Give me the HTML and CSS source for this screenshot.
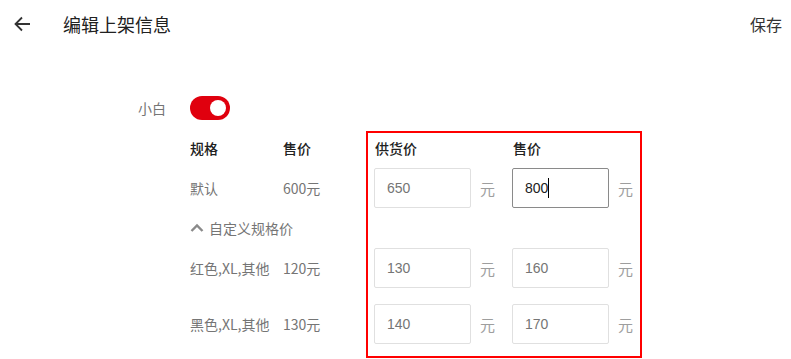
FILE: index.html
```html
<!DOCTYPE html>
<html lang="zh">
<head>
<meta charset="utf-8">
<link rel="stylesheet" href="styles.css">
</head>
<body>
<header class="topbar">
  <svg class="back" width="16" height="16" viewBox="0 0 16 16"><path d="M16 8H2M8 1.5L1.5 8L8 14.5" fill="none" stroke="#333" stroke-width="1.8"/></svg>
  <h1 class="title">编辑上架信息</h1>
  <span class="save">保存</span>
</header>
<main class="content">
  <div class="switch-row">
    <span class="switch-label">小白</span>
    <span class="switch"><span class="knob"></span></span>
  </div>
  <div class="grid">
    <div class="left">
      <div class="row head"><span class="c1">规格</span><span class="c2">售价</span></div>
      <div class="row item"><span class="c1">默认</span><span class="c2">600元</span></div>
      <div class="row custom">
        <svg class="chev" width="14" height="10" viewBox="0 0 14 10"><path d="M1.5 8L7 2.5L12.5 8" fill="none" stroke="#8a8a8a" stroke-width="2.4"/></svg>
        <span>自定义规格价</span>
      </div>
      <div class="row item"><span class="c1">红色,XL,其他</span><span class="c2">120元</span></div>
      <div class="row item last"><span class="c1">黑色,XL,其他</span><span class="c2">130元</span></div>
    </div>
    <div class="box">
      <div class="row head"><span class="c3">供货价</span><span class="c3">售价</span></div>
      <div class="row item">
        <span class="field"><span class="input">650</span><span class="unit">元</span></span>
        <span class="field"><span class="input active"><span class="caret">800</span></span><span class="unit">元</span></span>
      </div>
      <div class="row custom"></div>
      <div class="row item">
        <span class="field"><span class="input">130</span><span class="unit">元</span></span>
        <span class="field"><span class="input">160</span><span class="unit">元</span></span>
      </div>
      <div class="row item last">
        <span class="field"><span class="input">140</span><span class="unit">元</span></span>
        <span class="field"><span class="input">170</span><span class="unit">元</span></span>
      </div>
    </div>
  </div>
</main>
</body>
</html>
```
FILE: styles.css
```css
* { box-sizing: border-box; }
body {
  margin: 0;
  width: 791px;
  height: 359px;
  overflow: hidden;
  background: #fff;
  font-family: "Noto Sans CJK SC", "Liberation Sans", sans-serif;
  font-size: 14px;
  color: #212121;
}
.topbar {
  height: 48px;
  display: flex;
  align-items: center;
  padding: 0 9px 0 14px;
}
.back { flex: none; margin-right: 33px; }
.title {
  margin: 0;
  font-size: 18px;
  font-weight: 400;
  color: #212121;
  flex: 1;
}
.save { font-size: 16px; color: #333; }
.content { padding-left: 138px; }
.switch-row {
  display: flex;
  align-items: center;
  height: 24px;
  margin-top: 48px;
}
.switch-label { width: 52px; color: #757575; }
.switch {
  position: relative;
  width: 40px;
  height: 24px;
  border-radius: 12px;
  background: #e0000e;
}
.knob {
  position: absolute;
  right: 4px;
  top: 4px;
  width: 16px;
  height: 16px;
  border-radius: 50%;
  background: #fff;
}
.grid {
  display: flex;
  margin-top: 11px;
  margin-left: 52px;
}
.left { width: 176px; flex: none; padding-top: 2px; }
.box {
  flex: none;
  width: 276px;
  border: 2px solid #f00;
  padding: 0 0 7px 6px;
}
.row { display: flex; align-items: center; }
.row.head { height: 30px; font-weight: 500; color: #212121; }
.row.item { height: 50px; color: #757575; }
.row.item.last { margin-top: 6px; }
.row.custom { height: 30px; color: #757575; }
.c1 { width: 93px; white-space: nowrap; }
.c2 { white-space: nowrap; }
.c3 { flex: none; width: 138px; padding-left: 1px; }
.field { display: flex; align-items: center; flex: none; width: 138px; }
.input {
  flex: none;
  width: 97px;
  height: 40px;
  border: 1px solid #e0e0e0;
  border-radius: 2px;
  padding-left: 12px;
  display: flex;
  align-items: center;
  font-family: "Liberation Sans", sans-serif;
  color: #757575;
}
.input.active { border-color: #8a8a8a; color: #212121; }
.caret { border-right: 1px solid #000; line-height: 20px; }
.unit { margin-left: 9px; color: #9e9e9e; font-size: 15px; }
.chev { margin-right: 5px; }
```
